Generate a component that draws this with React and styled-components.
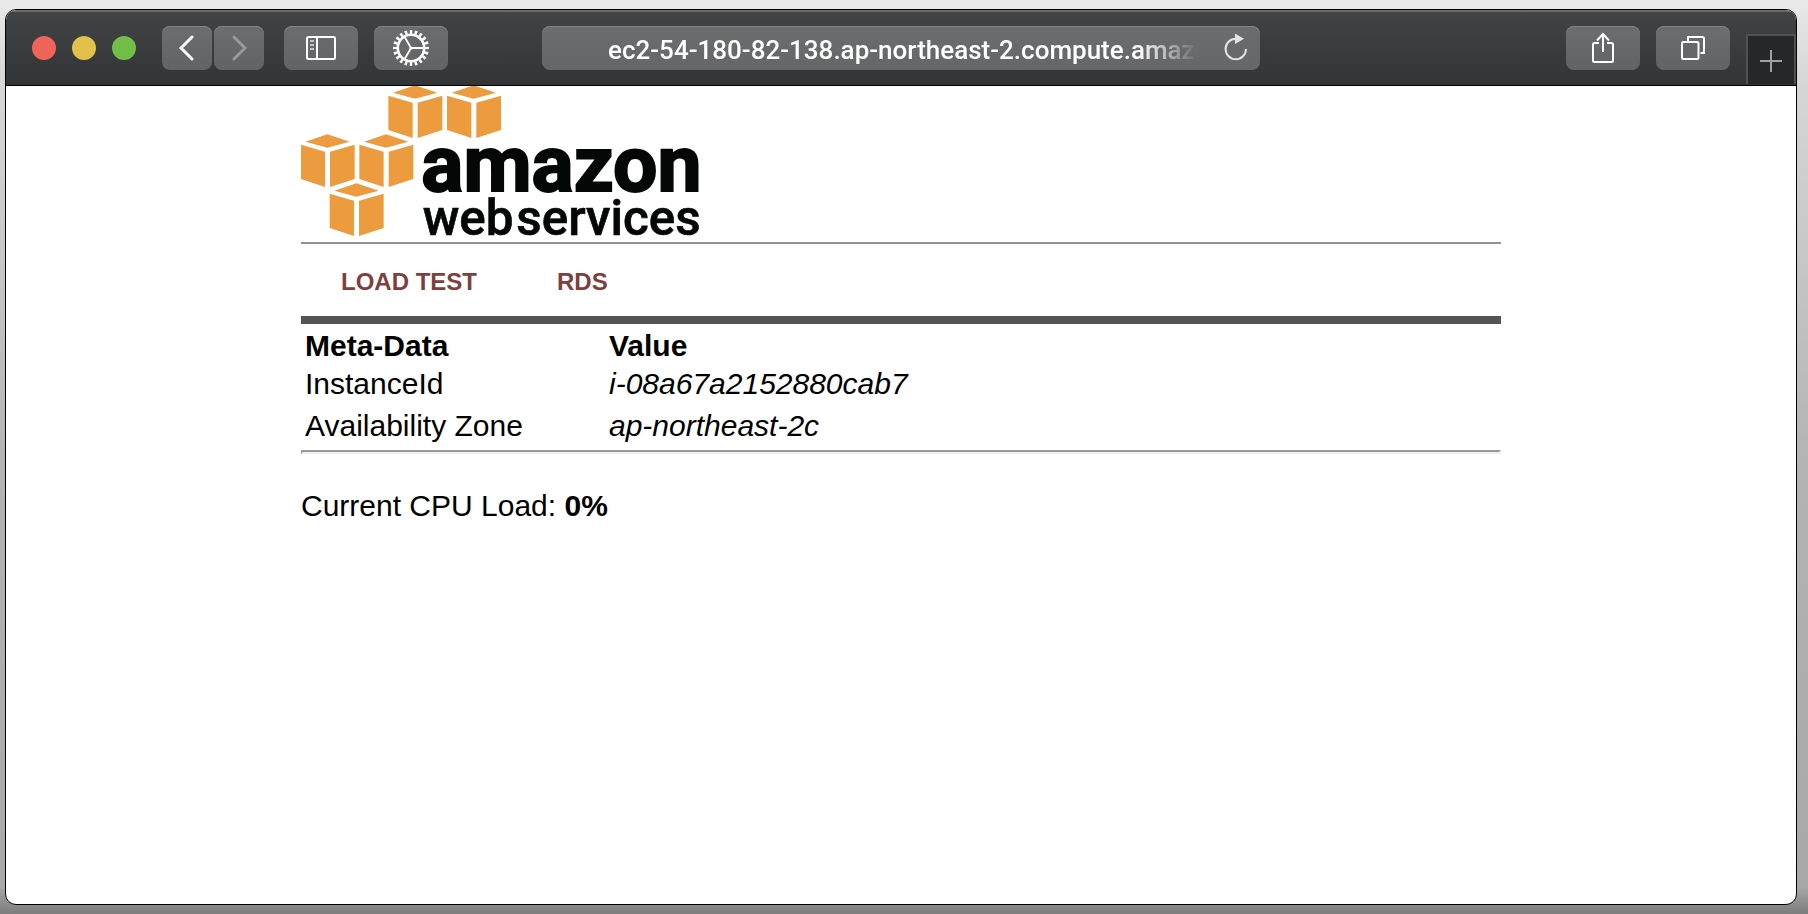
import React from 'react';
import styled, { createGlobalStyle } from 'styled-components';

const GlobalStyle = createGlobalStyle`
  *, *::before, *::after { box-sizing: border-box; }
  body {
    margin: 0;
    background: #e6e6e6;
    color: #000;
    font-family: 'Liberation Sans', Arial, sans-serif;
  }
`;

const Desktop = styled.div`
  display: flex;
  min-height: 100vh;
  padding: 9px 11px 9px 5px;
  background: linear-gradient(#e9e9e9 0%, #d8d8d8 8%, #b4b4b4 50%, #a8a8a8 97%, #7c7c7c 100%);
`;

const BrowserWindow = styled.div`
  flex: 1;
  min-width: 0;
  display: flex;
  flex-direction: column;
  overflow: hidden;
  border: 1px solid #000;
  border-radius: 11px;
  background: #fff;
`;

const Toolbar = styled.header`
  display: grid;
  grid-template-columns: 1fr minmax(0, 718px) 1fr;
  height: 76px;
  padding-bottom: 1px;
  border-top: 2px solid #6b6b6d;
  border-bottom: 1px solid #000;
  background: linear-gradient(#424345, #333436);
`;

const ToolbarStart = styled.div`
  display: flex;
  align-items: center;
  padding-left: 26px;
`;

const ToolbarEnd = styled.div`
  display: flex;
  align-items: center;
  justify-content: flex-end;
  gap: 16px;
`;

const TrafficLights = styled.div`
  display: flex;
  gap: 16px;
  margin-right: 26px;
`;

const TrafficLight = styled.button`
  width: 24px;
  height: 24px;
  padding: 0;
  border: 0;
  border-radius: 50%;
  background: ${({ $color }) => $color};
`;

const ButtonGroup = styled.div`
  display: flex;
  gap: ${({ $gap }) => $gap}px;
  margin-right: ${({ $after }) => $after || 0}px;
`;

const ToolButton = styled.button`
  display: flex;
  align-items: center;
  justify-content: center;
  width: ${({ $narrow }) => ($narrow ? 50 : 74)}px;
  height: 44px;
  padding: 0;
  border: 0;
  border-radius: 8px;
  background: linear-gradient(#6c6d6f, #626365);
  box-shadow: inset 0 1px 0 #808183;
  color: #fff;

  &:disabled { color: #98999b; }
`;

const AddressBar = styled.form`
  align-self: center;
  display: flex;
  align-items: center;
  height: 44px;
  padding: 0 10px 0 66px;
  border-radius: 8px;
  background: linear-gradient(#6c6d6f, #656668);
  box-shadow: inset 0 1px 0 #808183;
`;

const AddressInput = styled.input`
  flex: 1;
  min-width: 0;
  height: 40px;
  padding: 4px 0 0;
  border: 0;
  outline: 0;
  background: none;
  color: #fff;
  font-family: Roboto, 'Liberation Sans', sans-serif;
  font-size: 26px;
  font-weight: 500;
  -webkit-mask-image: linear-gradient(to left, transparent 0, #000 60px);
  mask-image: linear-gradient(to left, transparent 0, #000 60px);
`;

const ReloadButton = styled.button`
  display: flex;
  align-items: center;
  justify-content: center;
  width: 28px;
  height: 32px;
  margin-left: 24px;
  padding: 0;
  border: 0;
  background: none;
  color: #e4e4e5;
`;

const NewTabButton = styled.button`
  align-self: flex-end;
  display: flex;
  align-items: center;
  justify-content: center;
  width: 50px;
  height: 50px;
  padding: 2px 0 0;
  border: 2px solid #505153;
  border-bottom-width: 0;
  background: #262729;
  color: #a0a0a1;
`;

const Page = styled.main`
  width: 100%;
  max-width: 1200px;
  margin: 0 auto;
  font-size: 30px;
  line-height: 34px;
`;

const Logo = styled.svg`
  display: block;
  width: 400px;
  height: 150px;
`;

const Nav = styled.nav`
  display: flex;
  margin-top: 6px;
  padding: 24px 0 20px;
  border-top: 2px solid #929292;
  border-bottom: 8px solid #555;
`;

const NavLink = styled.a`
  padding: 0 40px;
  color: #803f3f;
  font-size: 24px;
  font-weight: 700;
  line-height: 28px;
  text-decoration: none;
`;

const MetaTable = styled.table`
  width: 100%;
  border-collapse: collapse;
  table-layout: fixed;
  text-align: left;
`;

const HeadCell = styled.th`
  width: ${({ $width }) => $width || 'auto'};
  padding: 5px 4px 0;
`;

const Cell = styled.td`
  padding: 4px;
  font-style: ${({ $italic }) => ($italic ? 'italic' : 'normal')};
`;

const Divider = styled.hr`
  height: 4px;
  margin: 3px 0 35px;
  border: 2px solid;
  border-color: #999 #eee #eee #999;
`;

const CpuLoad = styled.p`
  margin: 0;
`;

const CUBES = [[263, 0], [439, 0], [0, 147], [176, 147], [87, 294]];

function AwsLogo() {
  return (
    <Logo viewBox="0 0 1200 450" role="img" aria-label="amazon web services">
      <g fill="#ec9c3f">
        {CUBES.map(([x, y]) => (
          <path
            key={`${x}-${y}`}
            transform={`translate(${x} ${y})`}
            d="M13 20 79-2 146 20 79 38ZM-1 29 72 50V156L-1 132ZM87 50 161 29V132L87 156Z"
          />
        ))}
      </g>
      <g fill="#050706" stroke="#050706" fontFamily="Roboto, 'Liberation Sans', sans-serif">
        <text x="361" y="315" fontSize="236" fontWeight="700" strokeWidth="6">amazon</text>
        <text x="365" y="446" fontSize="148" fontWeight="500" strokeWidth="2">web</text>
        <text x="646" y="446" fontSize="148" fontWeight="500" strokeWidth="2">services</text>
      </g>
    </Logo>
  );
}

function Chevron({ forward }) {
  return (
    <svg width="16" height="26" viewBox="0 0 16 26" fill="none" stroke="currentColor" strokeWidth="3" strokeLinecap="round">
      <path d={forward ? 'M3 2 14 13 3 24' : 'M13 2 2 13 13 24'} />
    </svg>
  );
}

function SidebarIcon() {
  return (
    <svg width="30" height="24" viewBox="0 0 30 24" fill="none" stroke="currentColor" strokeWidth="2">
      <rect x="1" y="1" width="28" height="22" rx="1.5" />
      <path d="M11 1V23" />
      <path d="M4 5H8M4 9H8M4 13H8" stroke="#c4c5c6" />
    </svg>
  );
}

function GearIcon() {
  return (
    <svg width="36" height="36" viewBox="0 0 36 36" fill="none" stroke="currentColor">
      <circle cx="18" cy="18" r="13.2" strokeWidth="2.6" />
      <circle cx="18" cy="18" r="16" strokeWidth="4" pathLength="200" strokeDasharray="5 5" strokeDashoffset="2.5" />
      <path d="M18 18H31M18 18 11.5 6.7M18 18 11.5 29.3" strokeWidth="1.8" />
      <circle cx="18" cy="18" r="1.6" fill="currentColor" stroke="none" />
    </svg>
  );
}

function ReloadIcon() {
  return (
    <svg width="24" height="28" viewBox="0 0 24 28" fill="none" stroke="currentColor" strokeWidth="2">
      <path d="M22 15A10.2 10.2 0 1 1 11.8 4.8" />
      <path d="M11 -.5V10L20 4.800Z" fill="currentColor" stroke="none" />
    </svg>
  );
}

function ShareIcon() {
  return (
    <svg width="24" height="32" viewBox="0 0 24 32" fill="none" stroke="currentColor" strokeWidth="2">
      <path d="M8 11H3.5A1.5 1.5 0 0 0 2 12.500V28.500A1.500 1.500 0 0 0 3.500 30H20.500A1.500 1.500 0 0 0 22 28.500V12.500A1.500 1.500 0 0 0 20.500 11H16" />
      <path d="M12 20V2M6 8.500 12 2 18 8.500" />
    </svg>
  );
}

function TabsIcon() {
  return (
    <svg width="24" height="24" viewBox="0 0 24 24" fill="none" stroke="currentColor" strokeWidth="2">
      <rect x="1" y="6" width="16.500" height="17" rx="1.500" />
      <path d="M7 5V1H21.500A1.500 1.500 0 0 1 23 2.500V17H19.500" />
    </svg>
  );
}

function PlusIcon() {
  return (
    <svg width="22" height="22" viewBox="0 0 22 22" fill="none" stroke="currentColor" strokeWidth="2">
      <path d="M11 0V22M0 11H22" />
    </svg>
  );
}

const METADATA = [
  ['InstanceId', 'i-08a67a2152880cab7'],
  ['Availability Zone', 'ap-northeast-2c'],
];

export default function App() {
  return (
    <Desktop>
      <GlobalStyle />
      <BrowserWindow>
        <Toolbar>
          <ToolbarStart>
            <TrafficLights>
              <TrafficLight $color="#ee6459" aria-label="Close" />
              <TrafficLight $color="#e1c04c" aria-label="Minimize" />
              <TrafficLight $color="#72be47" aria-label="Zoom" />
            </TrafficLights>
            <ButtonGroup $gap={2} $after={20}>
              <ToolButton $narrow aria-label="Back"><Chevron /></ToolButton>
              <ToolButton $narrow disabled aria-label="Forward"><Chevron forward /></ToolButton>
            </ButtonGroup>
            <ButtonGroup $gap={16}>
              <ToolButton aria-label="Sidebar"><SidebarIcon /></ToolButton>
              <ToolButton aria-label="Settings"><GearIcon /></ToolButton>
            </ButtonGroup>
          </ToolbarStart>
          <AddressBar onSubmit={(event) => event.preventDefault()}>
            <AddressInput
              type="text"
              aria-label="Address"
              spellCheck={false}
              defaultValue="ec2-54-180-82-138.ap-northeast-2.compute.amazonaws.com"
            />
            <ReloadButton type="button" aria-label="Reload"><ReloadIcon /></ReloadButton>
          </AddressBar>
          <ToolbarEnd>
            <ToolButton aria-label="Share"><ShareIcon /></ToolButton>
            <ToolButton aria-label="Show tabs"><TabsIcon /></ToolButton>
            <NewTabButton aria-label="New tab"><PlusIcon /></NewTabButton>
          </ToolbarEnd>
        </Toolbar>
        <Page>
          <AwsLogo />
          <Nav>
            <NavLink href="#load-test">LOAD TEST</NavLink>
            <NavLink href="#rds">RDS</NavLink>
          </Nav>
          <MetaTable>
            <thead>
              <tr>
                <HeadCell scope="col" $width="304px">Meta-Data</HeadCell>
                <HeadCell scope="col">Value</HeadCell>
              </tr>
            </thead>
            <tbody>
              {METADATA.map(([name, value]) => (
                <tr key={name}>
                  <Cell>{name}</Cell>
                  <Cell $italic>{value}</Cell>
                </tr>
              ))}
            </tbody>
          </MetaTable>
          <Divider />
          <CpuLoad>Current CPU Load: <b>0%</b></CpuLoad>
        </Page>
      </BrowserWindow>
    </Desktop>
  );
}
